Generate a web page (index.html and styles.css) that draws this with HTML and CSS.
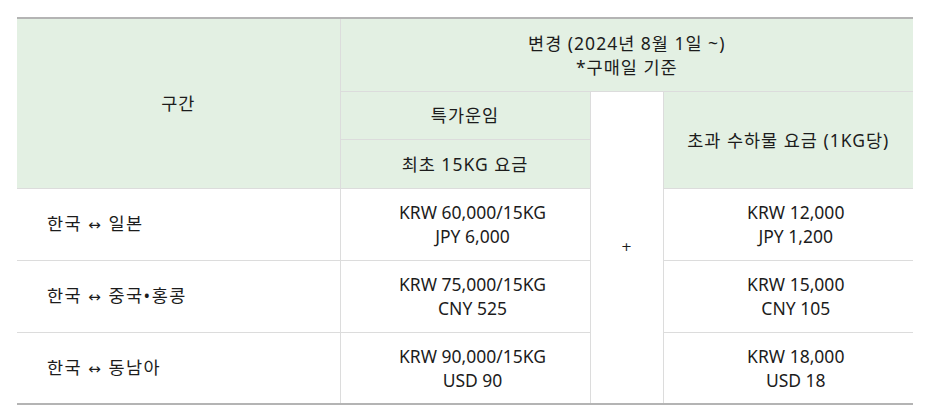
FILE: index.html
```html
<!DOCTYPE html>
<html lang="ko">
<head>
<meta charset="utf-8">
<link rel="stylesheet" href="styles.css">
</head>
<body>
<div class="wrap">
<table class="fare">
  <colgroup>
    <col class="c1"><col class="c2"><col class="c3"><col class="c4">
  </colgroup>
  <tbody>
    <tr class="h1">
      <th rowspan="3" class="sect">구간</th>
      <th colspan="3">변경 (2024년 8월 1일 ~)<br>*구매일 기준</th>
    </tr>
    <tr class="h2">
      <th>특가운임</th>
      <td rowspan="5" class="plus">+</td>
      <th rowspan="2">초과 수하물 요금 (1KG당)</th>
    </tr>
    <tr class="h3">
      <th>최초 15KG 요금</th>
    </tr>
    <tr class="row">
      <td class="route">한국 <span class="arr">↔</span> 일본</td>
      <td class="val">KRW 60,000/15KG<br>JPY 6,000</td>
      <td class="val">KRW 12,000<br>JPY 1,200</td>
    </tr>
    <tr class="row">
      <td class="route">한국 <span class="arr">↔</span> 중국•홍콩</td>
      <td class="val">KRW 75,000/15KG<br>CNY 525</td>
      <td class="val">KRW 15,000<br>CNY 105</td>
    </tr>
    <tr class="row">
      <td class="route">한국 <span class="arr">↔</span> 동남아</td>
      <td class="val">KRW 90,000/15KG<br>USD 90</td>
      <td class="val">KRW 18,000<br>USD 18</td>
    </tr>
  </tbody>
</table>
</div>
</body>
</html>
```

FILE: styles.css
```css
html, body {
  margin: 0;
  padding: 0;
  background: #ffffff;
}
.wrap {
  padding: 17px 0 0 17px;
}
.fare {
  width: 896px;
  table-layout: fixed;
  border-collapse: collapse;
  border-top: 2px solid #b4b4b4;
  border-bottom: 2px solid #b4b4b4;
  font-family: "Noto Sans", "Noto Sans CJK KR", sans-serif;
  font-size: 17.5px;
  color: #1c1c1c;
  line-height: 24px;
}
.c1 { width: 323px; }
.c2 { width: 250px; }
.c3 { width: 73px; }
.c4 { width: 250px; }
.fare th, .fare td {
  border: 1px solid #dcdcdc;
  text-align: center;
  vertical-align: middle;
  padding: 0;
  font-weight: normal;
}
.fare th {
  background: #e3f0e3;
  letter-spacing: 1px;
}
.fare .sect { border-left: none; }
.fare .h1 > th:last-child { border-right: none; }
.fare .h2 > th:last-child { border-right: none; }
.h1 { height: 73px; }
.h2 { height: 48px; }
.h3 { height: 49px; }
.row { height: 72px; }
.fare .plus {
  background: #ffffff;
  font-family: "DejaVu Sans", sans-serif;
  font-size: 13px;
}
.fare td.route {
  text-align: left;
  padding-left: 30px;
  border-left: none;
  letter-spacing: 1.5px;
}
.fare td.val {
  padding-left: 15px;
}
.arr {
  font-family: "DejaVu Sans", sans-serif;
  font-size: 15px;
}
.fare .row > td:last-child { border-right: none; }
```
